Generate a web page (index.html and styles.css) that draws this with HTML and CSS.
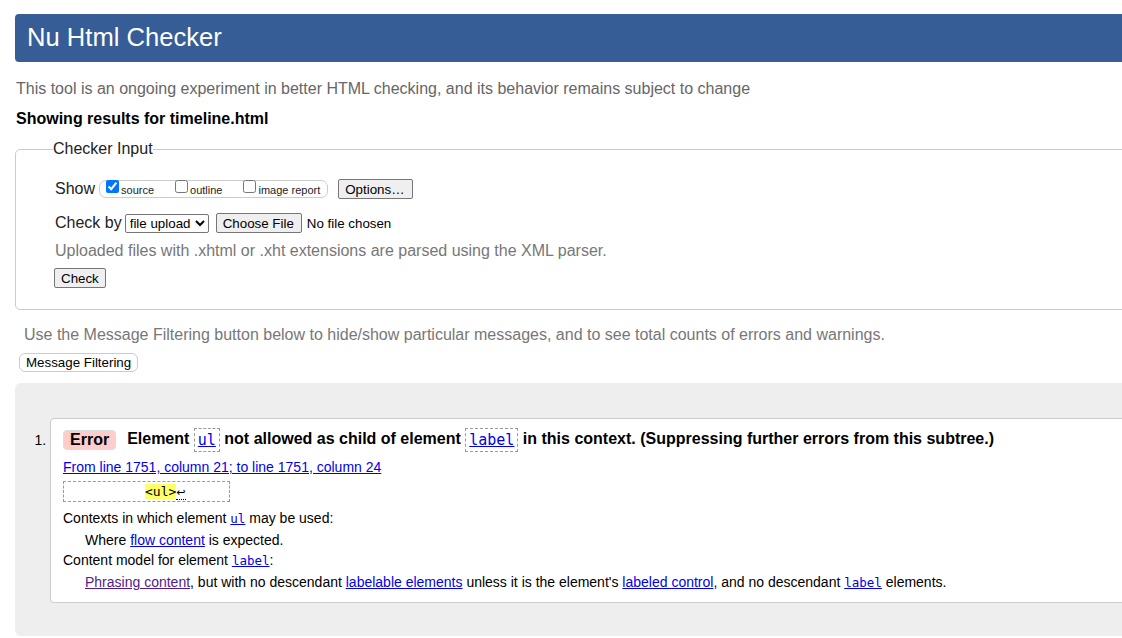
FILE: index.html
```html
<!DOCTYPE html>
<html lang="en">
<head>
<meta charset="utf-8">
<title>Nu Html Checker</title>
<link rel="stylesheet" href="styles.css">
</head>
<body>
<div class="page">
  <header class="banner"><h1>Nu Html Checker</h1></header>
  <p class="intro">This tool is an ongoing experiment in better HTML checking, and its behavior remains subject to change</p>
  <p class="results-for">Showing results for timeline.html</p>
  <form class="checker-form">
    <fieldset class="checker">
      <legend>Checker Input</legend>
      <div class="row show-row">
        <span class="lbl">Show</span>
        <span class="opts">
          <label class="opt"><input type="checkbox" checked><span>source</span></label>
          <label class="opt"><input type="checkbox"><span>outline</span></label>
          <label class="opt"><input type="checkbox"><span>image report</span></label>
        </span>
        <button type="button" class="btn options-btn">Options…</button>
      </div>
      <div class="row by-row">
        <span class="lbl">Check by</span>
        <select class="sel"><option>file upload</option></select>
        <input type="file" class="file">
      </div>
      <p class="note">Uploaded files with .xhtml or .xht extensions are parsed using the XML parser.</p>
      <button type="button" class="btn check-btn">Check</button>
    </fieldset>
  </form>
  <p class="filter-note">Use the Message Filtering button below to hide/show particular messages, and to see total counts of errors and warnings.</p>
  <button type="button" class="filter-btn">Message Filtering</button>
  <div class="results-area">
    <ol class="messages">
      <li class="msg">
        <p class="msg-head"><strong class="badge">Error</strong><span class="msg-text">Element <code class="tag"><a href="#">ul</a></code> not allowed as child of element <code class="tag"><a href="#">label</a></code> in this context. (Suppressing further errors from this subtree.)</span></p>
        <p class="location"><a href="#">From line 1751, column 21; to line 1751, column 24</a></p>
        <p class="extract"><code><b>&lt;ul&gt;</b><span class="lf">↩</span></code></p>
        <dl class="details">
          <dt>Contexts in which element <a href="#"><code>ul</code></a> may be used:</dt>
          <dd>Where <a href="#">flow content</a> is expected.</dd>
          <dt>Content model for element <a href="#"><code>label</code></a>:</dt>
          <dd><a href="#" class="visited">Phrasing content</a>, but with no descendant <a href="#">labelable elements</a> unless it is the element's <a href="#">labeled control</a>, and no descendant <a href="#"><code>label</code></a> elements.</dd>
        </dl>
      </li>
    </ol>
  </div>
</div>
</body>
</html>
```
FILE: styles.css
```css
html {
  overflow: hidden;
}
body {
  margin: 0;
  font-family: "Liberation Sans", Arial, sans-serif;
  color: #000;
  background: #fff;
}
.page {
  width: 1240px;
  padding: 14px 0 0 15px;
}
.banner {
  background: #365d95;
  border-radius: 4px;
  height: 48px;
  display: flex;
  align-items: center;
  padding-left: 12px;
}
.banner h1 {
  margin: 0;
  font-size: 25.6px;
  font-weight: normal;
  color: #fff;
  line-height: 1;
}
.intro {
  margin: 18px 0 0 1px;
  font-size: 16px;
  line-height: 18px;
  color: #666;
}
.results-for {
  margin: 12px 0 0 1px;
  font-size: 16px;
  line-height: 18px;
  font-weight: bold;
  color: #000;
}
.checker-form {
  margin: 12px 0 0 0;
}
.checker {
  margin: 0;
  border: 1px solid #ccc;
  border-radius: 5px;
  padding: 20px 0 21px 39px;
}
.checker legend {
  font-size: 16px;
  line-height: 18px;
  padding: 0;
  margin-left: -2px;
  color: #222;
}
.row {
  display: flex;
  align-items: center;
  height: 22px;
  font-size: 16px;
  color: #222;
}
.by-row {
  margin-top: 12px;
}
.lbl {
  margin-right: 4px;
}
.by-row .lbl {
  margin-right: 3px;
}
.opts {
  display: inline-flex;
  align-items: flex-start;
  height: 18px;
  box-sizing: border-box;
  border: 1px solid #ccc;
  border-radius: 7px;
  padding: 0 7px 0 6px;
}
.opt {
  display: inline-flex;
  align-items: flex-start;
  font-size: 11px;
  margin-right: 21px;
}
.opt:last-child {
  margin-right: 0;
}
.opt input {
  margin: -1px 2px 0 0;
  width: 13px;
  height: 13px;
}
.opt span {
  padding-top: 3px;
  line-height: 13px;
}
.btn {
  font-family: "Liberation Sans", Arial, sans-serif;
  font-size: 13.33px;
  height: 20px;
  padding: 0 6px;
  border: 1px solid #767676;
  border-radius: 2px;
  background: #efefef;
  color: #000;
}
.options-btn {
  margin-left: 10px;
  padding: 0 7px 0 6px;
}
.sel {
  font-family: "Liberation Sans", Arial, sans-serif;
  font-size: 13.33px;
  width: 84px;
  height: 19px;
  border: 1px solid #767676;
  border-radius: 2px;
  background: #fff;
  color: #000;
  padding: 0;
}
.file {
  margin-left: 7px;
  font-family: "Liberation Sans", Arial, sans-serif;
  font-size: 13.33px;
  color: #000;
}
.file::file-selector-button {
  font-family: "Liberation Sans", Arial, sans-serif;
  font-size: 13.33px;
  height: 20px;
  padding: 0 7px 0 6px;
  border: 1px solid #767676;
  border-radius: 2px;
  background: #efefef;
  margin-right: 5px;
}
.note {
  margin: 8px 0 0 0;
  font-size: 16px;
  line-height: 18px;
  color: #777;
}
.check-btn {
  margin-top: 8px;
  margin-left: -1px;
  display: block;
}
.filter-note {
  margin: 16px 0 0 9px;
  font-size: 16px;
  line-height: 18px;
  color: #777;
}
.filter-btn {
  display: block;
  margin: 9px 0 0 4px;
  height: 19px;
  padding: 0 6px;
  font-family: "Liberation Sans", Arial, sans-serif;
  font-size: 13.33px;
  color: #000;
  background: #fff;
  border: 1px solid #ccc;
  border-radius: 6px;
}
.results-area {
  margin-top: 11px;
  background: #eee;
  border-radius: 6px;
  padding: 35px 0 33px 35px;
}
.messages {
  margin: 0;
  padding: 0;
  font-size: 14px;
}
.msg {
  background: #fff;
  border: 1px solid #ccc;
  border-radius: 4px;
  padding: 9px 0 9px 12px;
}
.msg::marker {
  font-size: 14px;
  color: #000;
}
.msg-head {
  margin: 0;
  display: flex;
  align-items: center;
  height: 24px;
  font-size: 16px;
  font-weight: bold;
}
.badge {
  display: inline-block;
  height: 20px;
  box-sizing: border-box;
  line-height: 18px;
  padding: 0 6px;
  background: #fcc;
  border: 1px solid #ddd;
  border-radius: 4px;
  margin-right: 11px;
}
.msg-text {
  white-space: nowrap;
}
.tag {
  display: inline-block;
  vertical-align: middle;
  border: 1px dashed #999;
  padding: 2px 3px;
  line-height: 18px;
  font-family: "DejaVu Sans Mono", monospace;
  font-size: 15px;
  font-weight: normal;
}
a {
  color: #00e;
}
a.visited {
  color: #551a8b;
}
.location {
  margin: 7px 0 0 0;
  font-size: 14px;
  line-height: 16px;
}
.extract {
  margin: 6px 0 0 0;
}
.extract code {
  display: block;
  width: 84px;
  height: 19px;
  padding-left: 81px;
  border: 1px dashed #999;
  font-family: "DejaVu Sans Mono", monospace;
  font-size: 13px;
  line-height: 19px;
  color: #000;
}
.extract b {
  font-weight: normal;
  background: #ff6;
  color: #000;
}
.extract .lf {
  font-family: "DejaVu Sans", sans-serif;
  font-size: 11px;
  border-bottom: 1px dotted #000;
  color: #000;
}
.details {
  margin: 6px 0 0 0;
  font-size: 14px;
  line-height: 20px;
}
.details dd {
  margin: 1px 0 0 22px;
}
.details code {
  font-family: "DejaVu Sans Mono", monospace;
  font-size: 12.5px;
}
```
